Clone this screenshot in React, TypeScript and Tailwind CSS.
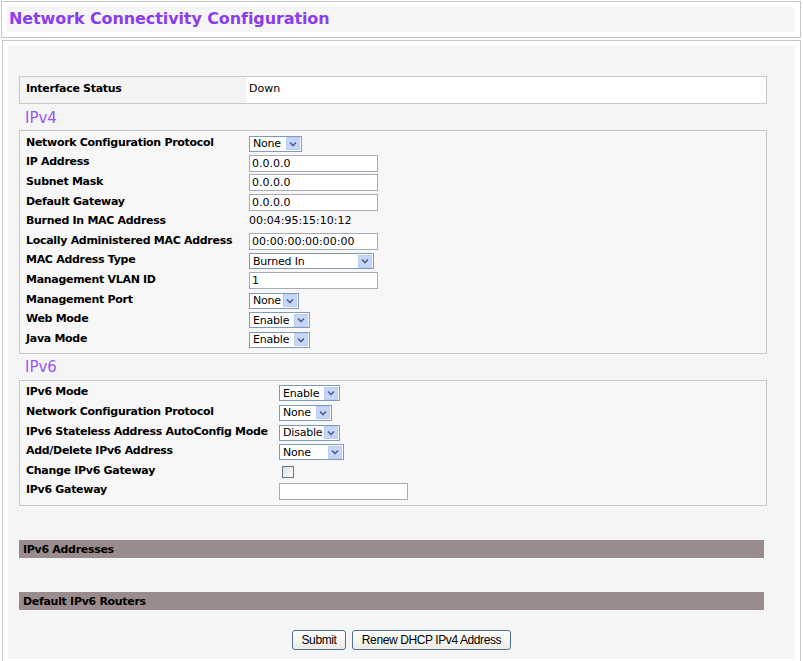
import React from "react";

const font = { fontFamily: '"DejaVu Sans", Verdana, sans-serif' };

function Arrow() {
  return (
    <div className="ml-auto mr-px flex h-[13px] w-[14px] items-center justify-center border border-[#bccbf0] bg-[#c6d5fb]">
      <svg width="8" height="6" viewBox="0 0 8 6">
        <path d="M1 1.5 L4 4.5 L7 1.5" fill="none" stroke="#4d6185" strokeWidth="1.6" />
      </svg>
    </div>
  );
}

function Sel({ text, className }: { text: string; className: string }) {
  return (
    <div className={"flex h-[16px] items-center border border-[#7f9db9] bg-white " + className}>
      <span className="pl-[3px] text-[11px] leading-none tracking-[-0.2px] text-black">{text}</span>
      <Arrow />
    </div>
  );
}

function Inp({ text, className }: { text: string; className: string }) {
  return (
    <div className={"flex h-[17px] items-center border border-[#a5acb5] bg-white " + className}>
      <span className="pl-[2px] text-[11px] leading-none text-black">{text}</span>
    </div>
  );
}

function Label({ children, w }: { children: React.ReactNode; w: string }) {
  return (
    <div className={"shrink-0 pb-[3px] pl-[6px] text-[11px] font-bold leading-none tracking-[-0.3px] text-black " + w}>
      {children}
    </div>
  );
}

function Row({ label, children, w, h }: { label: string; children: React.ReactNode; w: string; h: string }) {
  return (
    <div className={"flex items-center " + h}>
      <Label w={w}>{label}</Label>
      <div className="flex items-center">{children}</div>
    </div>
  );
}

export default function App() {
  const v4w = "w-[229px]";
  const v6w = "w-[259px]";
  const r = "h-[19.6px]";
  return (
    <div className="h-[661px] w-[803px] overflow-hidden bg-white" style={font}>
      {/* Header */}
      <div className="ml-px mt-px h-[37px] w-[800px] border border-[#c6c6c6] bg-white p-[5px]">
        <div className="flex h-full items-center bg-[#f5f5f5] pb-px pl-[2px]">
          <span className="text-[16px] font-bold leading-none tracking-[-0.1px] text-[#8c3cf0]">
            Network Connectivity Configuration
          </span>
        </div>
      </div>

      {/* Main */}
      <div className="ml-[2px] mt-[2px] h-[625px] w-[799px] border border-[#c6c6c6] bg-white p-[5px]">
        <div className="h-full bg-[#f5f5f5] pl-[11px] pt-[30px]">
          {/* Interface Status */}
          <div className="flex h-[28px] w-[748px] border border-[#c8c8c8]">
            <div className="flex w-[226px] items-center bg-[#f4f4f4]">
              <Label w="w-[226px]">Interface Status</Label>
            </div>
            <div className="flex flex-1 items-center bg-white pb-[3px] pl-[3px] text-[11px] leading-none text-black">
              Down
            </div>
          </div>

          <div className="flex h-[26px] items-center pl-[6px] pt-[2px] text-[15px] leading-none text-[#9a55f5]">IPv4</div>

          {/* IPv4 */}
          <div className="w-[748px] border border-[#c8c8c8] bg-[#f7f7f7] pb-[3px] pt-[3px]">
            <Row label="Network Configuration Protocol" w={v4w} h={r}>
              <Sel text="None" className="w-[53px]" />
            </Row>
            <Row label="IP Address" w={v4w} h={r}>
              <Inp text="0.0.0.0" className="w-[129px]" />
            </Row>
            <Row label="Subnet Mask" w={v4w} h={r}>
              <Inp text="0.0.0.0" className="w-[129px]" />
            </Row>
            <Row label="Default Gateway" w={v4w} h={r}>
              <Inp text="0.0.0.0" className="w-[129px]" />
            </Row>
            <Row label="Burned In MAC Address" w={v4w} h={r}>
              <span className="pb-[3px] text-[11px] leading-none text-black">00:04:95:15:10:12</span>
            </Row>
            <Row label="Locally Administered MAC Address" w={v4w} h={r}>
              <Inp text="00:00:00:00:00:00" className="w-[129px]" />
            </Row>
            <Row label="MAC Address Type" w={v4w} h={r}>
              <Sel text="Burned In" className="w-[125px]" />
            </Row>
            <Row label="Management VLAN ID" w={v4w} h={r}>
              <Inp text="1" className="w-[129px]" />
            </Row>
            <Row label="Management Port" w={v4w} h={r}>
              <Sel text="None" className="w-[50px]" />
            </Row>
            <Row label="Web Mode" w={v4w} h={r}>
              <Sel text="Enable" className="w-[61px]" />
            </Row>
            <Row label="Java Mode" w={v4w} h={r}>
              <Sel text="Enable" className="w-[61px]" />
            </Row>
          </div>

          <div className="flex h-[26px] items-center pl-[6px] pt-[2px] text-[15px] leading-none text-[#9a55f5]">IPv6</div>

          {/* IPv6 */}
          <div className="w-[748px] border border-[#c8c8c8] bg-[#f7f7f7] pb-[4px] pt-[3px]">
            <Row label="IPv6 Mode" w={v6w} h={r}>
              <Sel text="Enable" className="w-[61px]" />
            </Row>
            <Row label="Network Configuration Protocol" w={v6w} h={r}>
              <Sel text="None" className="w-[53px]" />
            </Row>
            <Row label="IPv6 Stateless Address AutoConfig Mode" w={v6w} h={r}>
              <Sel text="Disable" className="w-[61px]" />
            </Row>
            <Row label="Add/Delete IPv6 Address" w={v6w} h={r}>
              <Sel text="None" className="w-[65px]" />
            </Row>
            <Row label="Change IPv6 Gateway" w={v6w} h={r}>
              <div className="ml-[3px] h-[12px] w-[12px] border border-[#5d7a9a] bg-gradient-to-br from-[#dcdcd6] to-white" />
            </Row>
            <Row label="IPv6 Gateway" w={v6w} h={r}>
              <Inp text="" className="w-[129px]" />
            </Row>
          </div>

          <div className="mt-[34px] flex h-[18px] w-[745px] items-center bg-[#9a8c8c] pl-[4px] text-[11px] font-bold leading-none tracking-[-0.3px] text-black">
            IPv6 Addresses
          </div>
          <div className="mt-[34px] flex h-[18px] w-[745px] items-center bg-[#9a8c8c] pl-[4px] text-[11px] font-bold leading-none tracking-[-0.3px] text-black">
            Default IPv6 Routers
          </div>

          <div className="-ml-[11px] mt-[20px] flex justify-center gap-[6px]">
            <button
              className="h-[20px] w-[54px] rounded-[3px] border border-[#4f6f95] bg-gradient-to-b from-white to-[#ebebe4] text-[12px] tracking-[-0.4px] text-black"
              style={{ fontFamily: '"Liberation Sans", Arial, sans-serif' }}
            >
              Submit
            </button>
            <button
              className="h-[20px] w-[159px] rounded-[3px] border border-[#4f6f95] bg-gradient-to-b from-white to-[#ebebe4] text-[12px] tracking-[-0.4px] text-black"
              style={{ fontFamily: '"Liberation Sans", Arial, sans-serif' }}
            >
              Renew DHCP IPv4 Address
            </button>
          </div>
        </div>
      </div>
    </div>
  );
}
